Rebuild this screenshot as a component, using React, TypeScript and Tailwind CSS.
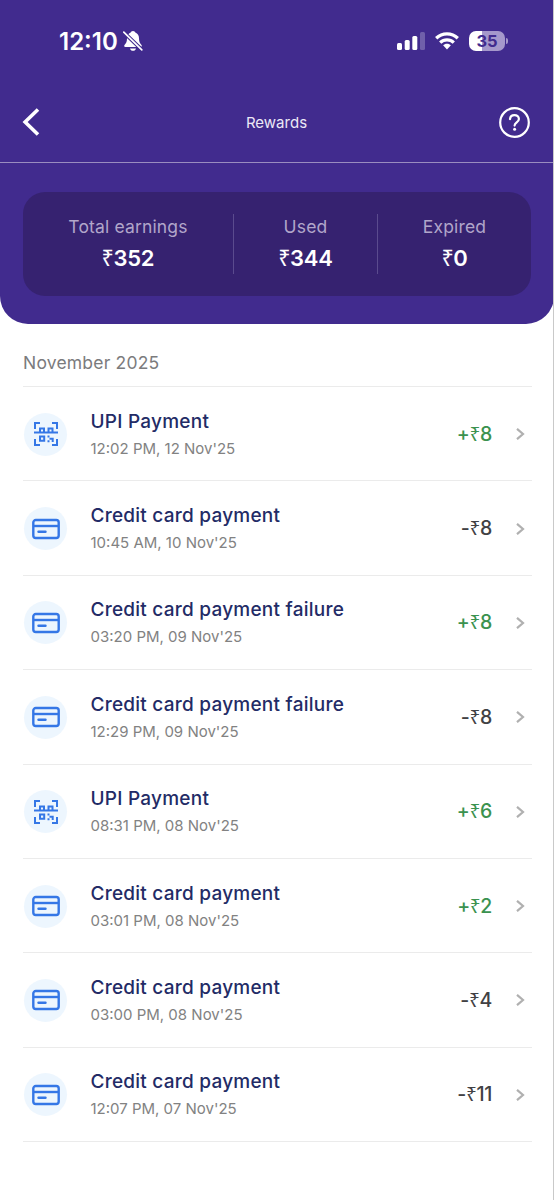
type IconKind = "upi" | "card";

interface Transaction {
    id: number;
    kind: IconKind;
    title: string;
    date: string;
    amount: number;
}

const transactions: Transaction[] = [
    { id: 1, kind: "upi", title: "UPI Payment", date: "12:02 PM, 12 Nov'25", amount: 8 },
    { id: 2, kind: "card", title: "Credit card payment", date: "10:45 AM, 10 Nov'25", amount: -8 },
    { id: 3, kind: "card", title: "Credit card payment failure", date: "03:20 PM, 09 Nov'25", amount: 8 },
    { id: 4, kind: "card", title: "Credit card payment failure", date: "12:29 PM, 09 Nov'25", amount: -8 },
    { id: 5, kind: "upi", title: "UPI Payment", date: "08:31 PM, 08 Nov'25", amount: 6 },
    { id: 6, kind: "card", title: "Credit card payment", date: "03:01 PM, 08 Nov'25", amount: 2 },
    { id: 7, kind: "card", title: "Credit card payment", date: "03:00 PM, 08 Nov'25", amount: -4 },
    { id: 8, kind: "card", title: "Credit card payment", date: "12:07 PM, 07 Nov'25", amount: -11 },
];

const QrIcon = () => (
    <svg width="26" height="26" viewBox="0 0 26 26" fill="none" stroke="#3577e6" strokeWidth="2">
        <path d="M2 8V2h5M19 2h5v6M2 18v6h5M19 24h5v-6" />
        <path d="M1 11.500h24" />
        <path d="M7 11V7.500h4V11M15.500 11V7.500h4V11" />
        <path d="M7 15.500h4.200v4.200H7z" />
        <path d="M14.500 15.500h2M16.500 17.800h3.200V21M14.500 20.200h2" />
    </svg>
);

const CardIcon = () => (
    <svg width="28" height="22" viewBox="0 0 28 22" fill="none" stroke="#3577e6" strokeWidth="2.400">
        <rect x="1.300" y="2" width="25.400" height="18" rx="2.500" />
        <path d="M1.500 8h25" />
        <path d="M6.500 13.800h7" strokeLinecap="round" />
    </svg>
);

const BellOffIcon = () => (
    <svg width="20" height="22" viewBox="0 0 20 22">
        <path
            d="M10 1C8.700 1 7.900 1.800 7.700 2.600 5.200 3.500 4 5.600 4 8.300c0 3.700-.8 4.900-2.300 6.500-.9 1-.6 2.100.7 2.100h15.200c1.300 0 1.600-1.100.7-2.100C16.800 13.200 16 12 16 8.300c0-2.700-1.200-4.800-3.700-5.700C12.100 1.800 11.300 1 10 1z"
            fill="white"
        />
        <path d="M7 18.400h6c-.4 1.500-1.500 2.400-3 2.400s-2.600-.9-3-2.400z" fill="white" />
        <path d="M0 1.500 19.500 20.500" stroke="#412b8e" strokeWidth="3.800" />
        <path d="M.8 2.200 18.800 19.800" stroke="white" strokeWidth="1.700" strokeLinecap="round" />
    </svg>
);

const SignalIcon = () => (
    <svg width="28" height="18" viewBox="0 0 28 18" fill="white">
        <rect x="0" y="11" width="5" height="7" rx="1.500" />
        <rect x="7.700" y="8" width="5" height="10" rx="1.500" />
        <rect x="15.300" y="4" width="5" height="14" rx="1.500" />
        <rect x="23" y="0" width="5" height="18" rx="1.500" opacity="0.25" />
    </svg>
);

const WifiIcon = () => (
    <svg width="24" height="18" viewBox="0 0 24 18" fill="none" stroke="white" strokeWidth="3.300">
        <path d="M1.200 6.200c6-5.700 15.600-5.700 21.600 0" />
        <path d="M5.200 10.600c3.800-3.600 9.800-3.600 13.600 0" />
        <path d="M12 11.800c-1.600 0-2.900.6-3.900 1.500L12 17.600l3.900-4.300C14.900 12.400 13.600 11.800 12 11.800z" fill="white" stroke="none" />
    </svg>
);

const StatusBar = () => (
    <div className="flex h-[82px] items-center pl-[59px] pr-[46px] text-white">
        <span className="mt-[2px] w-[59px] text-[24px] leading-none font-semibold">12:10</span>
        <span className="ml-[5px]">
            <BellOffIcon />
        </span>
        <div className="ml-auto flex items-center">
            <SignalIcon />
            <span className="ml-[10px]">
                <WifiIcon />
            </span>
            <div className="ml-[10px] flex h-5 w-9 items-center justify-center rounded-[7px] bg-linear-to-r from-white from-35% to-[#a598cb] to-35%">
                <span className="text-[16.500px] leading-none font-bold text-[#412b8e]">35</span>
            </div>
            <span className="ml-px h-[6px] w-[2px] rounded-r-full bg-[#a598cb]" />
        </div>
    </div>
);

const NavBar = () => (
    <div className="flex h-[81px] items-center justify-between border-b border-[#9a8dc0] pr-[24px] pl-[22px] text-white">
        <svg width="33" height="30" viewBox="0 0 33 30" fill="none" stroke="white" strokeWidth="3.600">
            <path d="M16 2.500 3.100 15 16 27.500" />
        </svg>
        <h1 className="mt-[3px] text-[15px] text-[#ece8f6]">Rewards</h1>
        <svg width="32" height="32" viewBox="0 0 32 32" fill="none" stroke="white" strokeWidth="2.200">
            <circle cx="16.500" cy="16.500" r="14.300" />
            <path d="M12 13.100c.2-2.500 2-4 4.400-4 2.600 0 4.500 1.600 4.500 3.900 0 3.400-4.300 3.400-4.300 6.600" strokeLinecap="round" />
            <circle cx="16.600" cy="23.200" r="1.500" fill="white" stroke="none" />
        </svg>
    </div>
);

const Rupee = () => <span className="font-['Noto_Sans',sans-serif] text-[0.98em] font-normal tracking-[-0.500px]">₹</span>;

const Stat = ({ label, value }: { label: string; value: number }) => (
    <div className="flex flex-col items-center">
        <span className="text-[17.500px] leading-6 tracking-[0.150px] text-[#b1a6ca]">{label}</span>
        <span className="mt-[5px] text-[22px] leading-7 font-semibold tracking-[-0.200px] text-white">
            <Rupee />
            {value}
        </span>
    </div>
);

const TransactionRow = ({ kind, title, date, amount }: Transaction) => (
    <li className="flex h-[94.380px] items-center border-b border-[#ebebeb]">
        <div className="mt-px ml-px flex h-[43px] w-[43px] items-center justify-center rounded-full bg-[#edf6fe]">
            {kind === "upi" ? <QrIcon /> : <CardIcon />}
        </div>
        <div className="mt-[3px] ml-[23.500px] flex-1">
            <div className="text-[19px] leading-6 font-medium tracking-[0.240px] text-[#232b66]">{title}</div>
            <div className="mt-[3px] text-[15px] leading-6 text-[#828282]">{date}</div>
        </div>
        <span
            className={`text-[19.500px] leading-7 font-medium tracking-[-0.300px] ${amount > 0 ? "text-[#3b924f]" : "text-[#414144]"}`}
        >
            {amount > 0 ? "+" : "-"}
            <Rupee />
            {Math.abs(amount)}
        </span>
        <svg className="mt-px mr-[7px] ml-6" width="9" height="12" viewBox="0 0 9 12" fill="none" stroke="#b0b0b0" strokeWidth="2.200">
            <path d="M1 .8 7 6 1 11.200" />
        </svg>
    </li>
);

export default function App() {
    return (
        <div className="h-[1200px] w-[554px] overflow-hidden border-r border-[#c9c9c9] bg-white font-['Inter','Noto_Sans',sans-serif]">
            <header className="-mr-px h-[324px] rounded-b-[28px] bg-[#412b8e]">
                <StatusBar />
                <NavBar />
                <div className="mx-[23px] mt-[29px] flex h-[104px] items-center rounded-[22px] bg-[#362270]">
                    <div className="mb-[2px] w-[210px]">
                        <Stat label="Total earnings" value={352} />
                    </div>
                    <div className="h-[60px] w-px bg-[#5b4b8e]" />
                    <div className="mb-[2px] w-[143px]">
                        <Stat label="Used" value={344} />
                    </div>
                    <div className="h-[60px] w-px bg-[#5b4b8e]" />
                    <div className="mb-[2px] flex-1">
                        <Stat label="Expired" value={0} />
                    </div>
                </div>
            </header>

            <main className="mr-[21px] ml-[23px]">
                <h2 className="flex h-[63px] items-center border-b border-[#ebebeb] pt-[16px] text-[17.500px] tracking-[0.200px] text-[#7b7b7d]">
                    November 2025
                </h2>
                <ul>
                    {transactions.map((item) => (
                        <TransactionRow key={item.id} {...item} />
                    ))}
                </ul>
            </main>
        </div>
    );
}
